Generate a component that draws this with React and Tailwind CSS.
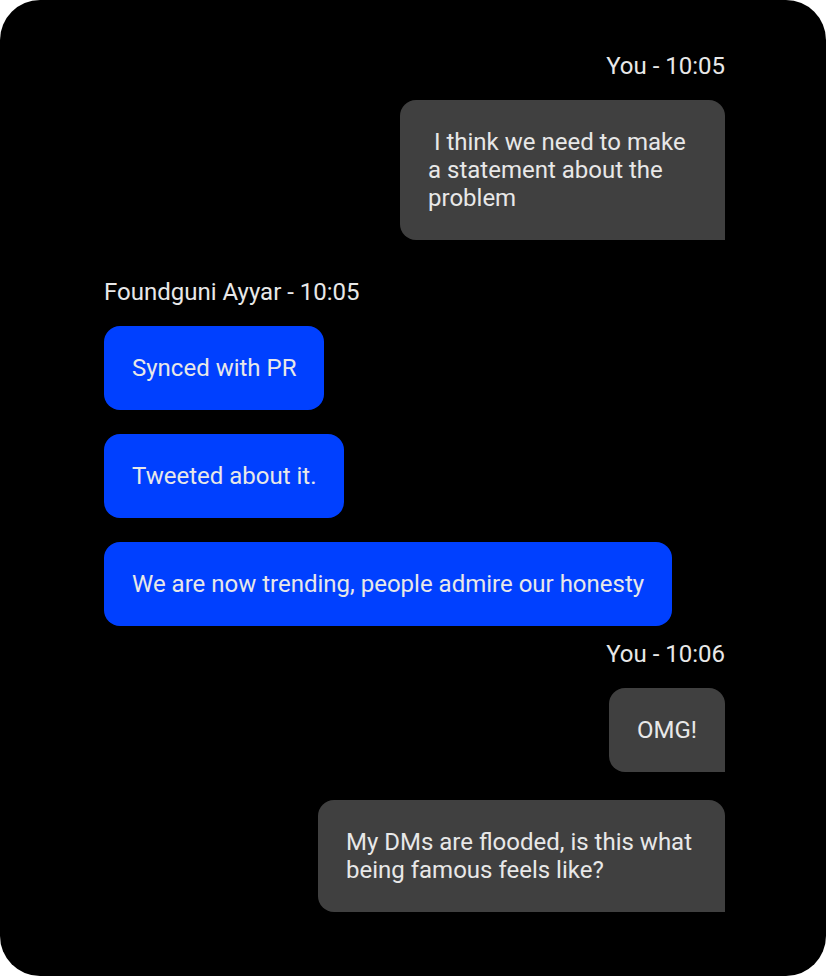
const You = ({ time }) => (
  <div className="self-end text-[24px] leading-[28px] text-[#e8e8e8]">You - {time}</div>
);

const Mine = ({ children, className = "" }) => (
  <div
    className={`self-end bg-[#404040] text-[#e8e8e8] rounded-2xl rounded-br-none px-7 py-7 text-[24px] leading-[28px] ${className}`}
  >
    {children}
  </div>
);

const Theirs = ({ children, className = "" }) => (
  <div
    className={`self-start bg-[#0040ff] text-[#e8e8e8] rounded-2xl px-7 py-7 text-[24px] leading-[28px] ${className}`}
  >
    {children}
  </div>
);

export default function App() {
  return (
    <div className="w-[826px] h-[976px] bg-white" style={{ fontFamily: "Roboto, sans-serif" }}>
      <div className="w-full h-full bg-black rounded-[40px] flex flex-col pl-[104px] pr-[101px] pt-[52px]">
        <You time="10:05" />
        <Mine className="mt-5 w-[325px]">&nbsp;I think we need to make a statement about the problem</Mine>

        <div className="mt-[38px] self-start text-[24px] leading-[28px] text-[#e8e8e8]">
          Foundguni Ayyar - 10:05
        </div>
        <Theirs className="mt-5">Synced with PR</Theirs>
        <Theirs className="mt-6">Tweeted about it.</Theirs>
        <Theirs className="mt-6">We are now trending, people admire our honesty</Theirs>

        <div className="mt-[14px] flex flex-col">
          <You time="10:06" />
        </div>
        <Mine className="mt-5">OMG!</Mine>
        <Mine className="mt-[28px] w-[407px]">My DMs are flooded, is this what being famous feels like?</Mine>
      </div>
    </div>
  );
}
